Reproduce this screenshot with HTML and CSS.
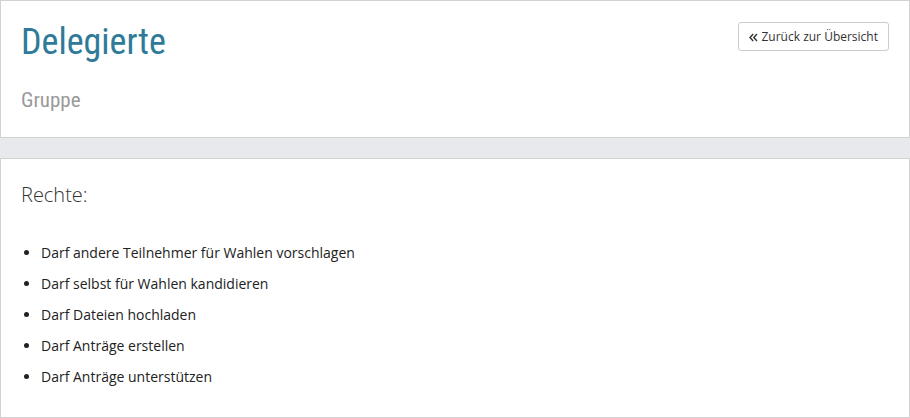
FILE: index.html
```html
<!DOCTYPE html>
<html lang="de">
<head>
<meta charset="utf-8">
<link rel="stylesheet" href="styles.css">
</head>
<body>
<div class="panel header">
  <div class="titles">
    <h1 class="title">Delegierte</h1>
    <h2 class="subtitle">Gruppe</h2>
  </div>
  <a class="btn" href="#"><svg class="chev" width="9" height="9" viewBox="0 0 9 9"><path d="M4.2 1 L1 4.5 L4.2 8 M8 1 L4.8 4.5 L8 8" fill="none" stroke="#333" stroke-width="1.4"/></svg>Zurück zur Übersicht</a>
</div>
<div class="panel content">
  <h3 class="rights">Rechte:</h3>
  <ul class="list">
    <li>Darf andere Teilnehmer für Wahlen vorschlagen</li>
    <li>Darf selbst für Wahlen kandidieren</li>
    <li>Darf Dateien hochladen</li>
    <li>Darf Anträge erstellen</li>
    <li>Darf Anträge unterstützen</li>
  </ul>
</div>
</body>
</html>
```

FILE: styles.css
```css
html, body {
  margin: 0;
  padding: 0;
}
body {
  background: #e8e9ec;
  font-family: "Open Sans", "Noto Sans", sans-serif;
  color: #333;
  width: 910px;
  height: 418px;
  overflow: hidden;
}
.panel {
  background: #fff;
  border: 1px solid #d2d2d2;
  box-sizing: border-box;
}
.header {
  height: 138px;
  display: flex;
  justify-content: space-between;
  align-items: flex-start;
  padding: 20px 20px 0 20px;
}
.title {
  margin: 0;
  font-family: "Roboto Condensed", "Liberation Sans Narrow", "DejaVu Sans Condensed", Roboto, sans-serif;
  font-weight: 400;
  font-size: 36px;
  line-height: 42px;
  color: #2f7a99;
}
.subtitle {
  margin: 24px 0 0 0;
  font-family: "Roboto Condensed", "Liberation Sans Narrow", "DejaVu Sans Condensed", Roboto, sans-serif;
  font-weight: 400;
  font-size: 21px;
  line-height: 26px;
  color: #999;
}
.btn {
  margin-top: 1px;
  display: inline-flex;
  align-items: center;
  border: 1px solid #ccc;
  border-radius: 3px;
  padding: 0 10px 0 10px;
  height: 29px;
  box-sizing: border-box;
  font-size: 12px;
  color: #333;
  text-decoration: none;
}
.chev {
  margin-right: 3px;
  margin-top: 1px;
}
.content {
  margin-top: 20px;
  height: 260px;
  padding: 22px 20px 0 20px;
}
.rights {
  margin: 0;
  font-weight: 300;
  font-size: 20px;
  line-height: 28px;
  color: #333;
}
.list {
  margin: 34px 0 0 0;
  padding-left: 20px;
  font-size: 14px;
  color: #222;
}
.list li {
  line-height: 20px;
  margin-bottom: 11px;
}
```
